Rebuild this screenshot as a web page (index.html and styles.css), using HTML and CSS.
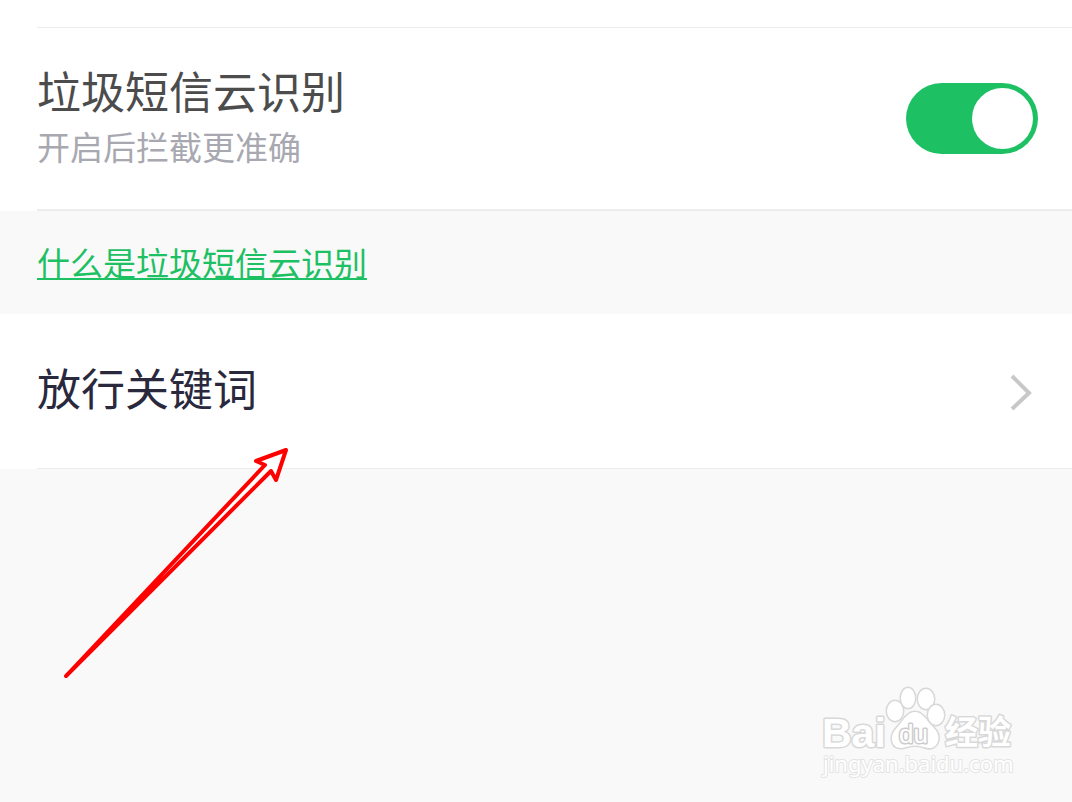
FILE: index.html
```html
<!DOCTYPE html>
<html lang="zh-CN">
<head>
    <meta charset="UTF-8">
    <meta name="viewport" content="width=device-width, initial-scale=1.0">
    <title>垃圾短信云识别</title>
    <link rel="stylesheet" href="styles.css">
</head>
<body>
    <main class="settings">
        <section class="group first">
            <div class="divider"></div>
            <div class="row">
                <label class="row-text" for="cloud">
                    <span class="title">垃圾短信云识别</span>
                    <span class="subtitle">开启后拦截更准确</span>
                </label>
                <input class="switch" type="checkbox" id="cloud" checked>
            </div>
            <div class="divider thick"></div>
        </section>

        <p class="help"><a href="#">什么是垃圾短信云识别</a></p>

        <section class="group">
            <a class="row link-row" href="#">
                <span class="row-text">
                    <span class="title dark">放行关键词</span>
                </span>
                <svg class="chevron" viewBox="0 0 24 40" aria-hidden="true">
                    <path d="M4 5 L21 22 L4 38"/>
                </svg>
            </a>
            <div class="divider"></div>
        </section>
    </main>

    <!-- red arrow pointing at the keyword row -->
    <svg class="arrow" viewBox="0 0 230 236" aria-hidden="true">
        <path d="M6 232 L205 21 L196 17 L226 6 L216 36 L211 27 Z"/>
    </svg>

    <svg class="watermark" viewBox="0 0 240 120">
        <g class="logo">
            <text class="latin" x="22" y="77">Bai</text>
            <ellipse cx="95" cy="41" rx="8" ry="10"/>
            <ellipse cx="108" cy="28" rx="7" ry="10"/>
            <ellipse cx="126" cy="29" rx="8" ry="10"/>
            <ellipse cx="136" cy="45" rx="8" ry="10"/>
            <path d="M115 42 C122 42 126 49 130 54 C135 59 140 63 138 71 C136 79 129 79 124 77 C118 75 112 75 106 77 C100 79 93 78 92 70 C91 63 96 59 100 54 C104 49 108 42 115 42 Z"/>
            <text class="du" x="99" y="73">du</text>
            <text class="cjk" x="145" y="74">经验</text>
        </g>
        <text class="site" x="23" y="102">jingyan.baidu.com</text>
    </svg>
</body>
</html>
```
FILE: styles.css
```css
* {
    box-sizing: border-box;
    margin: 0;
    padding: 0;
}
body {
    position: relative;
    min-height: 100vh;
    background: #f9f9f9;
    font-family: "Noto Sans CJK SC", sans-serif;
}
.group {
    background: #fff;
}
.group.first {
    padding-top: 27px;
}
.divider {
    height: 1px;
    margin-left: 37px;
    background: #ececec;
}
.divider.thick {
    height: 2px;
}
.row {
    display: flex;
    align-items: center;
    justify-content: space-between;
    padding: 30px 34px 31px 37px;
}
.row-text {
    display: flex;
    flex-direction: column;
    padding-bottom: 8px;
}
.title {
    font-size: 44px;
    line-height: 64px;
    color: #4c4c4c;
}
.title.dark {
    color: #2a283d;
}
.subtitle {
    font-size: 33px;
    line-height: 48px;
    color: #a8a8b0;
}
.switch {
    appearance: none;
    flex: none;
    display: flex;
    justify-content: flex-end;
    width: 132px;
    height: 71px;
    padding: 5px;
    border-radius: 36px;
    background: #c8c8c8;
    cursor: pointer;
}
.switch::before {
    content: "";
    width: 61px;
    border-radius: 50%;
    background: #fff;
}
.switch:checked {
    background: #1ec064;
}
.switch:not(:checked) {
    justify-content: flex-start;
}
.help {
    padding: 27px 37px 28px;
    font-size: 33px;
    line-height: 48px;
}
.help a {
    color: #1ec064;
    text-decoration-thickness: 2px;
    text-underline-offset: 2px;
    text-decoration-skip-ink: none;
}
.link-row {
    padding: 41px 40px 41px 37px;
    text-decoration: none;
}
.chevron {
    width: 24px;
    height: 40px;
    fill: none;
    stroke: #c8c8c8;
    stroke-width: 4;
}
.arrow {
    position: absolute;
    left: 60px;
    top: 444px;
    width: 230px;
    height: 236px;
    fill: #fff;
    stroke: #f00;
    stroke-width: 4;
    stroke-linejoin: round;
    pointer-events: none;
}
.watermark {
    position: absolute;
    right: 32px;
    bottom: 12px;
    width: 240px;
    height: 120px;
    fill: #fff;
    stroke: #d8d8d8;
    stroke-width: 3;
    stroke-linejoin: round;
    paint-order: stroke;
}
.watermark .latin {
    font: bold 41px "Liberation Sans", sans-serif;
}
.watermark .du {
    font: 26px "Liberation Sans", sans-serif;
    stroke: #cccccc;
}
.watermark .cjk {
    font: bold 33px "Noto Sans CJK SC", sans-serif;
}
.watermark .site {
    font: 22px "Noto Sans", sans-serif;
    stroke: #e4e4e4;
    stroke-width: 2;
}
```
